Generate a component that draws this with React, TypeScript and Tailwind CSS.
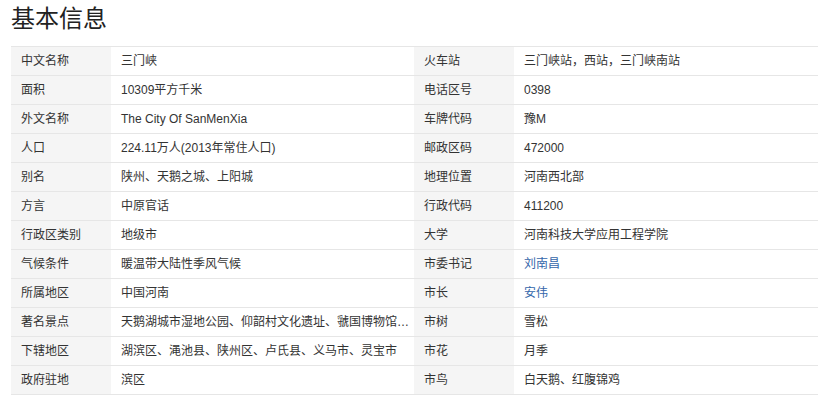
import React from "react";

type Cell = { label: string; value: string; link?: boolean };

const rows: [Cell, Cell][] = [
  [{ label: "中文名称", value: "三门峡" }, { label: "火车站", value: "三门峡站，西站，三门峡南站" }],
  [{ label: "面积", value: "10309平方千米" }, { label: "电话区号", value: "0398" }],
  [{ label: "外文名称", value: "The City Of SanMenXia" }, { label: "车牌代码", value: "豫M" }],
  [{ label: "人口", value: "224.11万人(2013年常住人口)" }, { label: "邮政区码", value: "472000" }],
  [{ label: "别名", value: "陕州、天鹅之城、上阳城" }, { label: "地理位置", value: "河南西北部" }],
  [{ label: "方言", value: "中原官话" }, { label: "行政代码", value: "411200" }],
  [{ label: "行政区类别", value: "地级市" }, { label: "大学", value: "河南科技大学应用工程学院" }],
  [{ label: "气候条件", value: "暖温带大陆性季风气候" }, { label: "市委书记", value: "刘南昌", link: true }],
  [{ label: "所属地区", value: "中国河南" }, { label: "市长", value: "安伟", link: true }],
  [{ label: "著名景点", value: "天鹅湖城市湿地公园、仰韶村文化遗址、虢国博物馆…" }, { label: "市树", value: "雪松" }],
  [{ label: "下辖地区", value: "湖滨区、渑池县、陕州区、卢氏县、义马市、灵宝市" }, { label: "市花", value: "月季" }],
  [{ label: "政府驻地", value: "滨区" }, { label: "市鸟", value: "白天鹅、红腹锦鸡" }],
];

function Pair({ c }: { c: Cell }) {
  return (
    <>
      <div className="w-[100px] shrink-0 bg-[#f5f5f5] pl-[10px] text-[#333333] whitespace-nowrap">
        {c.label}
      </div>
      <div
        className={
          "w-[303px] shrink-0 pl-[10px] whitespace-nowrap " +
          (c.link ? "text-[#3366aa]" : "text-[#333333]")
        }
      >
        {c.value}
      </div>
    </>
  );
}

export default function App() {
  return (
    <div
      className="w-[829px] h-[405px] bg-white overflow-hidden"
      style={{ fontFamily: '"Liberation Sans", Arial, "Noto Sans CJK SC", sans-serif' }}
    >
      <div className="pl-[11px] h-[46px] text-[24px] leading-[38px] text-[#222222]">基本信息</div>
      <div className="ml-[11px] w-[807px] border-t border-[#e6e6e6]">
        {rows.map((r, i) => (
          <div
            key={i}
            className="flex h-[29px] items-stretch border-b border-[#e6e6e6] text-[12px] leading-[28px]"
          >
            <Pair c={r[0]} />
            <Pair c={r[1]} />
          </div>
        ))}
      </div>
    </div>
  );
}
